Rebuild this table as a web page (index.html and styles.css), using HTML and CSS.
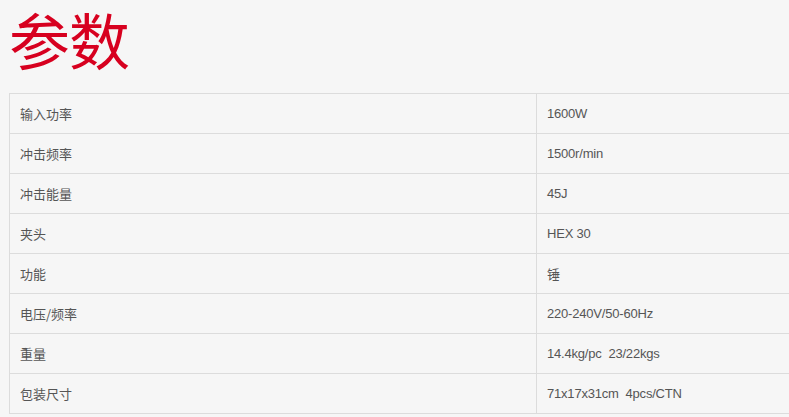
FILE: index.html
```html
<!DOCTYPE html>
<html lang="zh">
<head>
<meta charset="utf-8">
<link rel="stylesheet" href="styles.css">
</head>
<body>
<div class="page">
  <h2 class="title">参数</h2>
  <table class="spec">
    <tr><td class="k">输入功率</td><td class="v">1600W</td></tr>
    <tr><td class="k">冲击频率</td><td class="v">1500r/min</td></tr>
    <tr><td class="k">冲击能量</td><td class="v">45J</td></tr>
    <tr><td class="k">夹头</td><td class="v">HEX 30</td></tr>
    <tr><td class="k">功能</td><td class="v">锤</td></tr>
    <tr><td class="k">电压/频率</td><td class="v">220-240V/50-60Hz</td></tr>
    <tr><td class="k">重量</td><td class="v">14.4kg/pc&nbsp; 23/22kgs</td></tr>
    <tr><td class="k">包装尺寸</td><td class="v">71x17x31cm&nbsp; 4pcs/CTN</td></tr>
  </table>
</div>
</body>
</html>
```
FILE: styles.css
```css
html, body {
  margin: 0;
  padding: 0;
  background: #f6f6f6;
  overflow: hidden;
}
.page {
  padding: 0 0 0 9px;
  width: 1100px;
}
.title {
  margin: 0;
  height: 93px;
  font-family: "Noto Sans CJK SC", sans-serif;
  font-weight: 400;
  font-size: 61px;
  line-height: 78px;
  color: #d7001f;
  letter-spacing: -1px;
}
.spec {
  border-collapse: collapse;
  width: 1054px;
  table-layout: fixed;
}
.spec td {
  height: 39px;
  padding: 0 10px;
  border: 1px solid #dcdcdc;
  font-size: 13px;
  color: #555;
  vertical-align: middle;
}
.spec .k {
  width: 506px;
  font-family: "Noto Sans CJK SC", sans-serif;
}
.spec .v {
  font-family: "Liberation Sans", "Noto Sans CJK SC", sans-serif;
  letter-spacing: -0.2px;
}
```
